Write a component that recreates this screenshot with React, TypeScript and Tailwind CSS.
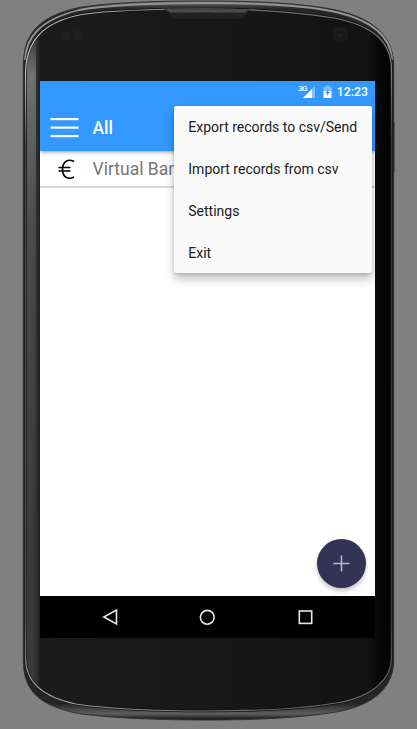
import React from "react";

const OUTER =
  "M208 1 C262 1 308 4 336 10 C376 19 393.7 38 393.7 66 V660 C393.7 686 376 705 336 712 C300 718 255 720 208 720 C160 720 106 718 76 713 C40 705 23.3 692 23.3 660 V66 C23.3 36 36 17 79 7.5 C113 2 160 1 208 1 Z";
const INNER =
  "M208 9 C262 9 302 13 334 18 C374 26 391.5 42 391.5 70 V658 C391.5 678 374 697 336 703 C300 709 255 711 208 711 C160 711 106 708.500 76 704 C42 697 25.500 682 25.500 658 V74 C25.500 42 42 22 82 14.500 C116 9.500 160 9 208 9 Z";

function PhoneBody() {
  return (
    <svg className="absolute inset-0" width="417" height="729" viewBox="0 0 417 729" fill="none">
      <defs>
        <linearGradient id="rim" x1="0" y1="0" x2="0" y2="729" gradientUnits="userSpaceOnUse">
          <stop offset="0" stopColor="#777" />
          <stop offset="0.012" stopColor="#252626" />
          <stop offset="0.05" stopColor="#252626" />
          <stop offset="0.965" stopColor="#242526" />
          <stop offset="0.979" stopColor="#5c5e60" />
          <stop offset="0.987" stopColor="#161616" />
        </linearGradient>
        <linearGradient id="face" x1="25" y1="0" x2="392" y2="0" gradientUnits="userSpaceOnUse">
          <stop offset="0" stopColor="#3b3b3b" />
          <stop offset="0.02" stopColor="#393a3a" />
          <stop offset="0.032" stopColor="#303030" />
          <stop offset="0.042" stopColor="#1b1b1b" />
          <stop offset="0.5" stopColor="#181818" />
          <stop offset="0.94" stopColor="#121212" />
          <stop offset="0.96" stopColor="#080808" />
          <stop offset="1" stopColor="#030303" />
        </linearGradient>
        <linearGradient id="sheen" x1="0" y1="35" x2="0" y2="700" gradientUnits="userSpaceOnUse">
          <stop offset="0" stopColor="#aaa" stopOpacity="0" />
          <stop offset="0.06" stopColor="#aaa" stopOpacity="0.5" />
          <stop offset="0.3" stopColor="#888" stopOpacity="0.22" />
          <stop offset="0.8" stopColor="#777" stopOpacity="0" />
        </linearGradient>
        <linearGradient id="edge" x1="25" y1="0" x2="392" y2="0" gradientUnits="userSpaceOnUse">
          <stop offset="0" stopColor="#c4c6c6" />
          <stop offset="0.3" stopColor="#989a9b" />
          <stop offset="0.7" stopColor="#6a6c6c" />
          <stop offset="1" stopColor="#7c7c7c" />
        </linearGradient>
        <linearGradient id="edgeFade" x1="0" y1="0" x2="0" y2="729" gradientUnits="userSpaceOnUse">
          <stop offset="0" stopColor="#fff" />
          <stop offset="0.1" stopColor="#fff" />
          <stop offset="0.2" stopColor="#555" />
          <stop offset="0.85" stopColor="#666" />
          <stop offset="1" stopColor="#fff" />
        </linearGradient>
        <mask id="edgeMask" maskUnits="userSpaceOnUse" x="0" y="0" width="417" height="729">
          <rect width="417" height="729" fill="url(#edgeFade)" />
        </mask>
        <pattern id="mesh" width="4" height="4" patternUnits="userSpaceOnUse">
          <rect width="4" height="4" fill="#232424" />
          <rect width="1" height="1" fill="#141414" />
          <rect x="2" y="2" width="1" height="1" fill="#141414" />
        </pattern>
        <clipPath id="faceClip">
          <path d={INNER} />
        </clipPath>
      </defs>
      <rect x="393" y="122" width="1.500" height="50" fill="#292929" />
      <path d={OUTER} fill="url(#rim)" stroke="#303131" strokeWidth="1" />
      <path
        d="M25 60 C26 38 39 20 79 10 C113 4 160 3 208 3 C262 3 308 6 336 12 C374 21 391 38 392 60"
        stroke="#949695"
        strokeWidth="1.800"
      />
      <path d={INNER} fill="url(#face)" stroke="#101010" strokeWidth="2.500" />
      <rect x="27" y="35" width="9" height="665" fill="url(#sheen)" clipPath="url(#faceClip)" />
      <path d={INNER} stroke="url(#edge)" strokeWidth="1.200" mask="url(#edgeMask)" />
      <path d="M164 9.500 Q169 10 172 18.500 H240 Q244 18 249 9.500 Z" fill="url(#mesh)" />
      <path d="M165 9.500 H249 L245 12.500 H170 Z" fill="#4a4c4c" />
      <circle cx="65.500" cy="35.500" r="5" fill="#1f2020" />
      <circle cx="78.500" cy="35.500" r="5" fill="#202121" />
      <circle cx="340.500" cy="35" r="8" fill="#1b1b1c" />
      <circle cx="340.500" cy="35" r="4" fill="#1a1a1f" />
      <circle cx="340.500" cy="35" r="1.600" fill="#25233c" />
    </svg>
  );
}

function StatusBar() {
  return (
    <div className="relative z-10 flex h-[25px] shrink-0 items-start justify-end bg-[#3398ff] pr-[7px] text-white">
      <span className="mt-[3px] text-[8px] leading-[10px] font-medium tracking-[-0.7px]">3G</span>
      <svg className="-ml-[5px] mt-[5px]" width="14" height="13" viewBox="0 0 14 13">
        <path d="M1 12 L13 0 V12 Z" fill="#82c0ff" />
        <path d="M1 12 L10 3 V12 Z" fill="#fff" />
      </svg>
      <svg className="ml-[7px] mt-[4px]" width="9" height="14" viewBox="0 0 9 14">
        <path d="M0.500 2.200 H2.500 V0.500 H6.500 V2.200 H8.500 V7 H0.500 Z" fill="#82c0ff" />
        <path d="M0.500 6 H8.500 V13 H0.500 Z" fill="#fff" />
        <path d="M5.300 4 L2.200 8.200 H4 V11 L6.800 7 H5.300 Z" fill="#3398ff" />
      </svg>
      <span className="ml-[5px] mt-[4px] text-[12.3px] leading-[15px] font-medium">12:23</span>
    </div>
  );
}

const MENU = ["Export records to csv/Send", "Import records from csv", "Settings", "Exit"];

function OverflowMenu() {
  return (
    <ul className="absolute top-[25px] left-[134px] z-20 w-[197.5px] rounded-[2px] bg-[#fafafa] shadow-[0_6px_10px_rgba(0,0,0,0.25),0_1px_3px_rgba(0,0,0,0.14)]">
      {MENU.map((label) => (
        <li
          key={label}
          className="flex h-[41.8px] items-center pt-px pl-[14.3px] text-[14px] leading-5 whitespace-nowrap text-[#202020]"
        >
          {label}
        </li>
      ))}
    </ul>
  );
}

export default function App() {
  return (
    <div className="relative h-[729px] w-[417px] overflow-hidden bg-[#808080] pt-[81px] pl-[40px] font-['Roboto',sans-serif]">
      <PhoneBody />
      <main className="relative flex h-[557px] w-[335px] flex-col overflow-hidden bg-white">
        <StatusBar />
        <header className="relative flex h-[45px] shrink-0 items-center bg-[#3398ff] pb-[2px] pl-[10px] text-white shadow-[0_1px_4px_rgba(0,0,0,0.4)]">
          <svg width="29" height="20" viewBox="0 0 29 20" fill="#fff">
            <rect x="0.500" y="0" width="28" height="2.200" />
            <rect x="0.500" y="8.500" width="28" height="2.200" />
            <rect x="0.500" y="17" width="28" height="2.200" />
          </svg>
          <h1 className="mt-px ml-[13.5px] text-[17.5px] leading-5 font-medium">All</h1>
        </header>
        <div className="flex h-[37px] shrink-0 items-center border-b-2 border-[#d8d8d8] pl-[17.5px]">
          <svg className="mt-px" width="18" height="21" viewBox="0 0 18 21" fill="none" stroke="#000" strokeWidth="1.700">
            <path d="M16 2.600 C10.500 -0.500 4.500 2 4.500 10.300 C4.500 18.600 10.500 21 16 18" />
            <path d="M0.500 8.500 H12.500 M0.500 12 H12.500" strokeWidth="1.400" />
          </svg>
          <span className="ml-[17px] text-[17.5px] leading-6 whitespace-nowrap text-[#767676]">Virtual Bank</span>
        </div>
        <section className="flex flex-1 items-end justify-end pr-[9px] pb-[8.5px]">
          <button
            aria-label="Add"
            className="flex size-[49px] items-center justify-center rounded-full bg-[#333355] shadow-[0_3px_4px_rgba(0,0,0,0.22)]"
          >
            <svg width="17" height="17" viewBox="0 0 17 17" stroke="#b8b8c8" strokeWidth="1.500">
              <path d="M8.500 0.500 V16.500 M0.500 8.500 H16.500" />
            </svg>
          </button>
        </section>
        <nav className="flex h-[42px] shrink-0 items-center justify-between bg-black pr-[61.5px] pl-[61.5px]">
          <svg width="17" height="18" viewBox="0 0 17 18" fill="none" stroke="#e8e8e8" strokeWidth="1.600">
            <path d="M14.500 2 V16 L1.800 9 Z" />
          </svg>
          <svg width="17" height="18" viewBox="0 0 17 18" fill="none" stroke="#e8e8e8" strokeWidth="1.600">
            <circle cx="8.300" cy="9.300" r="6.900" />
          </svg>
          <svg width="17" height="18" viewBox="0 0 17 18" fill="none" stroke="#e8e8e8" strokeWidth="1.600">
            <rect x="2.300" y="3" width="12.400" height="12.400" />
          </svg>
        </nav>
        <OverflowMenu />
      </main>
    </div>
  );
}
